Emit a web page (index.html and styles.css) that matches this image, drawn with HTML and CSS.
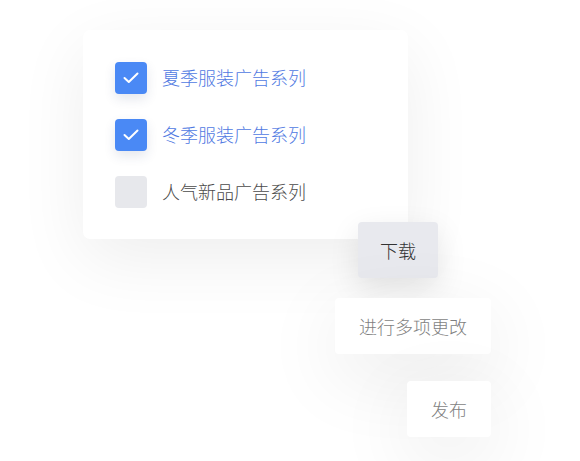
FILE: index.html
```html
<!DOCTYPE html>
<html>
<head>
    <title>广告系列</title>
    <link rel="stylesheet" href="styles.css">
</head>
<body>
    <div class="panel">
        <div class="card">
            <label class="option checked">
                <span class="box">
                    <svg width="16" height="16" viewBox="0 0 16 16"><polyline points="1.5,8 5.8,12 14.5,3.5" fill="none" stroke="#fff" stroke-width="2" stroke-linecap="round" stroke-linejoin="round"/></svg>
                </span>
                <span class="text">夏季服装广告系列</span>
            </label>
            <label class="option checked">
                <span class="box">
                    <svg width="16" height="16" viewBox="0 0 16 16"><polyline points="1.5,8 5.8,12 14.5,3.5" fill="none" stroke="#fff" stroke-width="2" stroke-linecap="round" stroke-linejoin="round"/></svg>
                </span>
                <span class="text">冬季服装广告系列</span>
            </label>
            <label class="option">
                <span class="box"></span>
                <span class="text">人气新品广告系列</span>
            </label>
        </div>
        <button class="btn btn-download">下载</button>
        <button class="btn btn-multi">进行多项更改</button>
        <button class="btn btn-publish">发布</button>
    </div>
</body>
</html>
```

FILE: styles.css
```css
body {
    margin: 0;
    background: #fff;
    font-family: "Noto Sans CJK SC", "Noto Sans", sans-serif;
    font-weight: 300;
}
.panel {
    width: 408px;
    padding: 30px 0 40px 83px;
    display: flex;
    flex-direction: column;
    align-items: flex-end;
}
.card {
    align-self: flex-start;
    box-sizing: border-box;
    width: 325px;
    height: 209px;
    padding: 32px;
    background: #fff;
    border-radius: 7px;
    box-shadow: 0 20px 70px rgba(0, 0, 0, 0.07);
    display: flex;
    flex-direction: column;
    gap: 25px;
}
.option {
    display: flex;
    align-items: center;
    gap: 15px;
    height: 32px;
}
.box {
    width: 32px;
    height: 32px;
    border-radius: 4px;
    background: #e7e8ec;
    display: flex;
    align-items: center;
    justify-content: center;
}
.option.checked .box {
    background: #4a89f5;
    box-shadow: 0 5px 12px rgba(40, 60, 110, 0.12);
}
.text {
    font-size: 18px;
    line-height: 30px;
    padding-bottom: 2px;
    color: #4b4b4b;
}
.option.checked .text {
    color: #5079e2;
}
.btn {
    box-sizing: border-box;
    height: 56px;
    border: none;
    border-radius: 4px;
    font-family: inherit;
    font-weight: 300;
    font-size: 18px;
    background: #fff;
    color: #7f7f7f;
    box-shadow: 0 20px 80px rgba(0, 0, 0, 0.09);
    cursor: pointer;
}
.btn-download {
    width: 80px;
    margin-top: -17px;
    margin-right: 53px;
    background: #e8e9ee;
    color: #333;
    box-shadow: 0 10px 30px rgba(0, 0, 0, 0.1);
}
.btn-multi {
    width: 156px;
    margin-top: 20px;
}
.btn-publish {
    width: 84px;
    margin-top: 27px;
}
```
